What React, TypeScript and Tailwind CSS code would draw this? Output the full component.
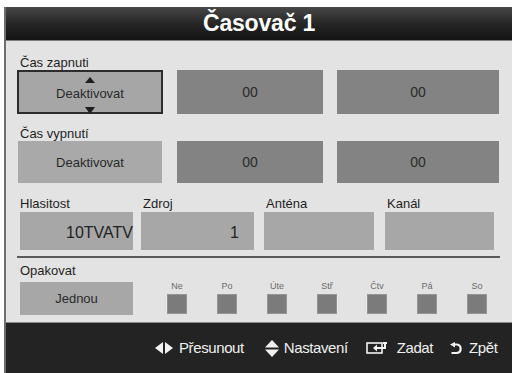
import React from "react";

const font = { fontFamily: '"Liberation Sans", Arial, sans-serif' };

const days = ["Ne", "Po", "Úte", "Stř", "Čtv", "Pá", "So"];

const Label = ({ children, className = "" }: { children: React.ReactNode; className?: string }) => (
  <div className={`h-[14px] text-[13px] leading-[14px] text-[#1e1e1e] ${className}`}>{children}</div>
);

const Box = ({
  children,
  className = "",
}: {
  children?: React.ReactNode;
  className?: string;
}) => (
  <div className={`flex items-center justify-center text-[13px] text-[#2a2a2a] ${className}`}>{children}</div>
);

const MoveIcon = () => (
  <svg width="18" height="12" viewBox="0 0 18 12">
    <polygon points="8,0 8,12 0,6" fill="#f2f2f2" />
    <polygon points="10,0 10,12 18,6" fill="#f2f2f2" />
  </svg>
);

const UpDownIcon = () => (
  <svg width="14" height="17" viewBox="0 0 14 17">
    <polygon points="7,0 14,7.5 0,7.5" fill="#f2f2f2" />
    <polygon points="0,9.5 14,9.5 7,17" fill="#f2f2f2" />
  </svg>
);

const EnterIcon = () => (
  <svg width="23" height="12" viewBox="0 0 23 12">
    <rect x="1" y="1" width="15" height="10" fill="none" stroke="#f2f2f2" strokeWidth="1.6" />
    <path d="M19 1 V6 H9" fill="none" stroke="#f2f2f2" strokeWidth="2" />
    <polygon points="7,6 11,2.5 11,9.5" fill="#f2f2f2" />
    <rect x="17" y="0" width="4" height="2" fill="#f2f2f2" />
  </svg>
);

const BackIcon = () => (
  <svg width="13" height="13" viewBox="0 0 13 13">
    <path d="M4 2.5 H7 A4.3 4.3 0 0 1 7 11 H1.5" fill="none" stroke="#f2f2f2" strokeWidth="2.2" />
    <polygon points="0,2.5 5,0 5,5.5" fill="#f2f2f2" />
  </svg>
);

export default function App() {
  return (
    <div className="w-[512px] h-[373px] bg-white pt-[7px] pl-[4px] overflow-hidden" style={font}>
      <div className="w-[508px] h-[366px] flex flex-col border-l-2 border-[#6e6e6e]">
        {/* header */}
        <div className="h-[34px] flex items-center justify-center bg-gradient-to-b from-[#484848] via-[#262626] to-[#141414] border-b border-[#7d7d7d]">
          <span className="text-white font-bold text-[23px] leading-none tracking-[-0.2px]">Časovač 1</span>
        </div>

        {/* body */}
        <div className="h-[281px] bg-[#e3e3e3] flex flex-col pt-[15px] pl-[11px]">
          <Label className="pl-[3px]">Čas zapnuti</Label>
          <div className="flex gap-[14px] h-[44px]">
            <Box className="relative w-[146px] bg-[#a6a6a6] border-[2px] border-[#2c2c2c]">
              <span className="absolute left-1/2 top-[5px] -translate-x-1/2 w-0 h-0 border-x-[5px] border-x-transparent border-b-[6px] border-b-[#1e1e1e]" />
              <span className="mt-[3px]">Deaktivovat</span>
              <span className="absolute left-1/2 bottom-[-2px] -translate-x-1/2 w-0 h-0 border-x-[5px] border-x-transparent border-t-[7px] border-t-[#1e1e1e]" />
            </Box>
            <Box className="w-[146px] bg-[#838383] text-[14px]">00</Box>
            <Box className="w-[162px] bg-[#838383] text-[14px]">00</Box>
          </div>

          <Label className="mt-[13px] pl-[3px]">Čas vypnutí</Label>
          <div className="flex gap-[14px] h-[42px]">
            <Box className="w-[144px] ml-[1px] mr-[1px] bg-[#a9a9a9] pt-[2px]">Deaktivovat</Box>
            <Box className="w-[146px] bg-[#838383] text-[14px]">00</Box>
            <Box className="w-[162px] bg-[#838383] text-[14px]">00</Box>
          </div>

          <div className="mt-[14px] ml-[3px] grid grid-cols-[113px_113px_112px_112px] gap-x-[8px] w-[474px]">
            <Label className="mb-[1px]">Hlasitost</Label>
            <Label className="pl-[2px]">Zdroj</Label>
            <Label className="pl-[4px]">Anténa</Label>
            <Label className="pl-[5px]">Kanál</Label>
            <div className="h-[38px] bg-[#a7a7a7] flex items-center justify-end text-[16px] text-[#222] pt-[3px]">10TVATV</div>
            <div className="h-[38px] bg-[#a7a7a7] flex items-center justify-end pr-[15px] text-[16px] text-[#222] pt-[3px]">1</div>
            <div className="h-[38px] bg-[#a7a7a7] ml-[2px]" />
            <div className="h-[38px] bg-[#a7a7a7] ml-[3px]" />
          </div>

          <div className="mt-[6px] w-[483px] h-[2px] bg-[#5a5a5a]" />

          <div className="flex mt-[6px] pl-[3px]">
            <div className="flex flex-col w-[113px]">
              <Label>Opakovat</Label>
              <Box className="h-[33px] mt-[4px] bg-[#a7a7a7] text-[13px]">Jednou</Box>
            </div>
            <div className="flex gap-[30px] ml-[34px] mt-[17px]">
              {days.map((d) => (
                <div key={d} className="flex flex-col items-center w-[20px]">
                  <span className="text-[9px] leading-[10px] text-[#6a6a6a]">{d}</span>
                  <div className="mt-[3px] w-[20px] h-[20px] bg-[#7b7b7b] border border-[#959595]" />
                </div>
              ))}
            </div>
          </div>
        </div>

        {/* footer */}
        <div className="flex-1 bg-[#232323] border-t border-[#8a8a8a] flex items-center pl-[149px] text-[15px] text-[#f0f0f0] tracking-[-0.4px]">
          <div className="flex items-center gap-[6px]">
            <MoveIcon />
            <span>Přesunout</span>
          </div>
          <div className="flex items-center gap-[5px] ml-[21px]">
            <UpDownIcon />
            <span>Nastavení</span>
          </div>
          <div className="flex items-center gap-[8px] ml-[18px]">
            <EnterIcon />
            <span>Zadat</span>
          </div>
          <div className="flex items-center gap-[6px] ml-[17px]">
            <BackIcon />
            <span>Zpět</span>
          </div>
        </div>
      </div>
    </div>
  );
}
